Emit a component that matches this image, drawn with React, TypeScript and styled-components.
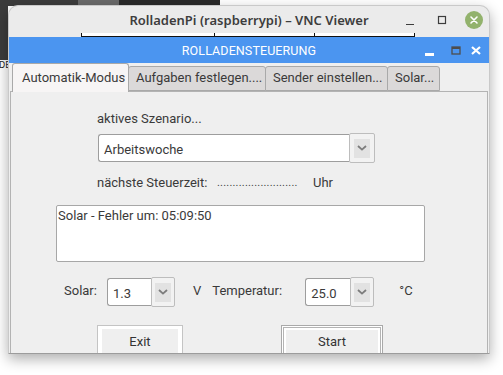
import React from "react";
import styled, { createGlobalStyle } from "styled-components";

const GlobalStyle = createGlobalStyle`
  html, body {
    margin: 0;
    padding: 0;
    background: #ffffff;
  }
  body {
    font-family: Roboto, "Liberation Sans", sans-serif;
    color: #3a3a3a;
  }
`;

export default function App() {
  return (
    <>
      <GlobalStyle />
      <Desktop>
        <DesktopLabel>DE</DesktopLabel>
        <VncWindow>
          <VncTitleBar>
            <span />
            <VncTitle>RolladenPi (raspberrypi) – VNC Viewer</VncTitle>
            <VncControls>
              <VncButton>
                <svg width="18" height="18" viewBox="0 0 18 18">
                  <path d="M5 13.5h8" stroke="#3c3c3c" strokeWidth="1.2" />
                </svg>
              </VncButton>
              <VncButton>
                <svg width="18" height="18" viewBox="0 0 18 18">
                  <rect x="5.5" y="5.5" width="7" height="7" fill="none" stroke="#3c3c3c" strokeWidth="1.2" />
                </svg>
              </VncButton>
              <CloseCircle>
                <svg width="18" height="18" viewBox="0 0 18 18">
                  <path d="M6 6l6 6M12 6l-6 6" stroke="#ffffff" strokeWidth="1.6" strokeLinecap="round" />
                </svg>
              </CloseCircle>
            </VncControls>
          </VncTitleBar>

          <RemoteView>
            <PanelStrip>
              <PanelCell $w={134} />
              <PanelCell $w={100} />
              <PanelCell $w={100} />
            </PanelStrip>

            <TkWindow>
              <TkTitleBar>
                <span />
                <TkTitle>ROLLADENSTEUERUNG</TkTitle>
                <TkControls>
                  <svg width="20" height="14" viewBox="0 0 20 14">
                    <rect x="2" y="10" width="9" height="3" fill="#ffffff" />
                  </svg>
                  <svg width="14" height="14" viewBox="0 0 14 14">
                    <rect x="3" y="4" width="8" height="7" fill="none" stroke="#4d4d4d" strokeWidth="1.3" />
                    <rect x="3" y="4" width="8" height="2" fill="#4d4d4d" />
                  </svg>
                  <svg width="14" height="14" viewBox="0 0 14 14">
                    <path d="M3 4l8 7M11 4l-8 7" stroke="#ffffff" strokeWidth="2.2" />
                  </svg>
                </TkControls>
              </TkTitleBar>

              <TabBar>
                <Tab $active $w={117}>Automatik-Modus</Tab>
                <Tab $w={138}>Aufgaben festlegen....</Tab>
                <Tab $w={123}>Sender einstellen...</Tab>
                <Tab $w={53}>Solar...</Tab>
              </TabBar>

              <TabPanel>
                <ScenarioLabel>aktives Szenario...</ScenarioLabel>
                <ScenarioCombo>
                  <ComboField $w={251}>Arbeitswoche</ComboField>
                  <ComboButton $w={26}>
                    <ComboKnob>
                      <Chevron />
                    </ComboKnob>
                  </ComboButton>
                </ScenarioCombo>

                <NextRow>
                  <NextLabel>nächste Steuerzeit:</NextLabel>
                  <Dots>..........................</Dots>
                  <span>Uhr</span>
                </NextRow>

                <LogBox>Solar - Fehler um: 05:09:50</LogBox>

                <ValueRow>
                  <ValueLabel $w={43}>Solar:</ValueLabel>
                  <Combo>
                    <ComboField $w={44}>1.3</ComboField>
                    <ComboButton $w={24}>
                      <ComboKnob>
                        <Chevron />
                      </ComboKnob>
                    </ComboButton>
                  </Combo>
                  <Unit $gap={18}>V</Unit>
                  <ValueLabel $w={93} $gap={11}>
                    Temperatur:
                  </ValueLabel>
                  <Combo>
                    <ComboField $w={45}>25.0</ComboField>
                    <ComboButton $w={24}>
                      <ComboKnob>
                        <Chevron />
                      </ComboKnob>
                    </ComboButton>
                  </Combo>
                  <Unit $gap={25}>°C</Unit>
                </ValueRow>

                <ButtonRow>
                  <TkButton $w={86}>Exit</TkButton>
                  <TkButton $w={102} $default>
                    Start
                  </TkButton>
                </ButtonRow>
              </TabPanel>
            </TkWindow>
          </RemoteView>
        </VncWindow>
      </Desktop>
    </>
  );
}

function Chevron() {
  return (
    <svg width="10" height="6" viewBox="0 0 10 6">
      <path d="M1 1l4 3.6L9 1" fill="none" stroke="#7c7c7c" strokeWidth="1.8" />
    </svg>
  );
}

const Desktop = styled.div`
  position: relative;
  width: 503px;
  height: 375px;
  overflow: hidden;
  padding: 5px 0 0 8px;
  box-sizing: border-box;
  background:
    linear-gradient(#3c3c3c, #3c3c3c) 0 0 / 8px 60px no-repeat,
    linear-gradient(#3c3c3c, #3c3c3c) 0 0 / 78px 6px no-repeat,
    linear-gradient(#6a6a6a, #6a6a6a) 78px 0 / 41px 6px no-repeat,
    linear-gradient(#2b2b2b, #2b2b2b) 119px 0 / 101px 6px no-repeat,
    #ffffff;
`;

const DesktopLabel = styled.span`
  position: absolute;
  left: -1px;
  top: 61px;
  font-size: 8px;
  line-height: 9px;
  color: #222;
  font-family: "DejaVu Sans", sans-serif;
`;

const VncWindow = styled.div`
  position: relative;
  width: 482px;
  height: 349px;
  box-sizing: border-box;
  border: 1px solid #c9c9c9;
  border-bottom-color: #9c9c9c;
  border-radius: 10px 10px 0 0;
  background: #ebebeb;
  overflow: hidden;
  display: flex;
  flex-direction: column;
  box-shadow: 0 5px 14px rgba(0, 0, 0, 0.32);
`;

const VncTitleBar = styled.div`
  height: 27px;
  flex: none;
  display: grid;
  grid-template-columns: 1fr auto 1fr;
  align-items: center;
`;

const VncTitle = styled.span`
  font-family: "Noto Sans", "Open Sans", sans-serif;
  font-weight: 600;
  font-size: 13px;
  color: #3d3d3d;
  margin-top: 1px;
`;

const VncControls = styled.div`
  display: flex;
  justify-content: flex-end;
  align-items: center;
  gap: 14px;
  padding-right: 6px;
`;

const VncButton = styled.span`
  width: 18px;
  height: 18px;
  display: flex;
`;

const CloseCircle = styled.span`
  width: 18px;
  height: 18px;
  border-radius: 50%;
  background: #92b26c;
  display: flex;
`;

const RemoteView = styled.div`
  flex: 1;
  display: flex;
  flex-direction: column;
  min-height: 0;
`;

const PanelStrip = styled.div`
  height: 4px;
  flex: none;
  display: flex;
  margin-left: 72px;
`;

const PanelCell = styled.div<{ $w: number }>`
  width: ${(p) => p.$w}px;
  box-sizing: border-box;
  background: #ffffff;
  border: 1px solid #111;
  border-top: none;
  & + & {
    border-left: none;
  }
`;

const TkWindow = styled.div`
  flex: 1;
  display: flex;
  flex-direction: column;
  background: #efefef;
  min-height: 0;
`;

const TkTitleBar = styled.div`
  height: 26px;
  flex: none;
  background: #4b95f0;
  display: grid;
  grid-template-columns: 1fr auto 1fr;
  align-items: center;
`;

const TkTitle = styled.span`
  color: #ffffff;
  font-size: 12.5px;
  letter-spacing: 0.1px;
`;

const TkControls = styled.div`
  display: flex;
  justify-content: flex-end;
  align-items: center;
  gap: 6px;
  padding-right: 6px;
`;

const TabBar = styled.div`
  height: 28px;
  flex: none;
  display: flex;
  align-items: flex-end;
  padding-left: 3px;
  position: relative;
  z-index: 1;
`;

const Tab = styled.div<{ $active?: boolean; $w: number }>`
  width: ${(p) => p.$w}px;
  height: ${(p) => (p.$active ? 29 : 25)}px;
  margin-bottom: ${(p) => (p.$active ? -1 : 0)}px;
  box-sizing: border-box;
  padding: ${(p) => (p.$active ? "6px 0 0 9px" : "3px 0 0 7px")};
  border: 1px solid #a9a9a9;
  border-bottom: ${(p) => (p.$active ? "none" : "1px solid #a9a9a9")};
  border-radius: 3px 3px 0 0;
  background: ${(p) => (p.$active ? "#f7f5f5" : "#dbd9d9")};
  font-size: 13px;
  line-height: 16px;
  color: #3a3a3a;
  white-space: nowrap;
  overflow: hidden;
  & + & {
    margin-left: -1px;
  }
`;

const TabPanel = styled.div`
  flex: 1;
  margin: 0 1px;
  border: 1px solid #b3b3b3;
  display: flex;
  flex-direction: column;
  align-items: flex-start;
  font-size: 13px;
  line-height: 16px;
  color: #3a3a3a;
`;

const ScenarioLabel = styled.div`
  margin: 19px 0 0 86px;
`;

const Combo = styled.div`
  display: flex;
  align-items: center;
  height: 30px;
`;

const ScenarioCombo = styled(Combo)`
  margin: 6px 0 0 87px;
`;

const ComboField = styled.div<{ $w: number }>`
  width: ${(p) => p.$w}px;
  height: 28px;
  box-sizing: border-box;
  background: #ffffff;
  border: 1px solid #9d9d9d;
  border-right: none;
  border-radius: 3px 0 0 3px;
  padding: 7px 0 0 5px;
  font-size: 13px;
  line-height: 16px;
  color: #3a3a3a;
`;

const ComboButton = styled.div<{ $w: number }>`
  width: ${(p) => p.$w}px;
  height: 30px;
  box-sizing: border-box;
  border: 1px solid #bdbdbd;
  border-radius: 2px;
  background: #f2f2f2;
  display: flex;
  align-items: center;
  justify-content: center;
`;

const ComboKnob = styled.div`
  width: 16px;
  height: 19px;
  background: #e2e2e2;
  display: flex;
  align-items: center;
  justify-content: center;
`;

const NextRow = styled.div`
  display: flex;
  margin: 12px 0 0 86px;
`;

const NextLabel = styled.span`
  width: 120px;
`;

const Dots = styled.span`
  width: 96px;
  font-size: 11px;
  letter-spacing: 0.2px;
  color: #444;
`;

const LogBox = styled.div`
  margin: 14px 0 0 45px;
  width: 369px;
  height: 57px;
  box-sizing: border-box;
  background: #ffffff;
  border: 1px solid #a7a7a7;
  border-radius: 2px;
  padding: 2px 0 0 1px;
  line-height: 16px;
`;

const ValueRow = styled.div`
  display: flex;
  align-items: center;
  margin: 15px 0 0 53px;
  height: 30px;
`;

const ValueLabel = styled.span<{ $w: number; $gap?: number }>`
  width: ${(p) => p.$w}px;
  margin-left: ${(p) => p.$gap ?? 0}px;
  margin-top: -3px;
`;

const Unit = styled.span<{ $gap: number }>`
  margin-left: ${(p) => p.$gap}px;
  margin-top: -3px;
`;

const ButtonRow = styled.div`
  display: flex;
  gap: 98px;
  margin: 18px 0 0 86px;
`;

const TkButton = styled.div<{ $w: number; $default?: boolean }>`
  width: ${(p) => p.$w}px;
  height: 34px;
  box-sizing: border-box;
  border: 1px solid ${(p) => (p.$default ? "#a9a9a9" : "#c4c4c4")};
  background: #efefef;
  box-shadow: ${(p) =>
    p.$default
      ? "inset 0 0 0 1px #ffffff, inset 0 0 0 2px #b4b4b4, inset 0 0 0 4px #ffffff"
      : "inset 0 0 0 3px #ffffff, inset 4px 0 0 0 #ffffff, inset -4px 0 0 0 #ffffff"};
  text-align: center;
  padding-top: 8px;
  color: #333;
`;
